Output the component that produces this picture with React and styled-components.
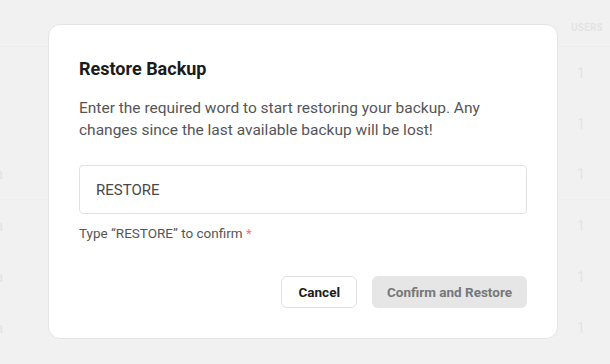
import React from "react";
import styled, { createGlobalStyle } from "styled-components";

const GlobalStyle = createGlobalStyle`
	html, body {
		margin: 0;
		padding: 0;
		background: #ffffff;
		font-family: Roboto, "Liberation Sans", Arial, sans-serif;
	}
	* {
		box-sizing: border-box;
	}
`;

const Page = styled.div`
	position: relative;
	width: 610px;
	height: 364px;
	overflow: hidden;
	background: #ffffff;
`;

const Table = styled.div`
	display: grid;
	grid-template-columns: 3px 1fr 39px;
	grid-auto-rows: 51px;
	grid-template-rows: 47px;
	color: #666666;
`;

const HeadCell = styled.div`
	padding-top: 22px;
	font-size: 10px;
	font-weight: 700;
	letter-spacing: 0.2px;
	text-transform: uppercase;
	border-bottom: 1px solid #d6d6d6;
`;

const Cell = styled.div`
	display: flex;
	align-items: center;
	justify-content: ${({ $align }) => ($align === "right" ? "flex-end" : "flex-start")};
	padding-left: ${({ $indent }) => $indent || 0}px;
	font-size: 14px;
	white-space: nowrap;
	overflow: hidden;
	border-bottom: ${({ $divider }) => ($divider ? "1px solid #d6d6d6" : "none")};
`;

const Overlay = styled.div`
	position: absolute;
	inset: 0;
	display: flex;
	align-items: center;
	justify-content: center;
	padding-right: 4px;
	padding-bottom: 1px;
	background: rgba(240, 240, 240, 0.9);
`;

const Modal = styled.div`
	width: 510px;
	padding: 32px 30px 30px;
	background: #ffffff;
	border: 1px solid #e4e4e4;
	border-radius: 12px;
`;

const Title = styled.h2`
	margin: 0;
	font-size: 18px;
	line-height: 24px;
	font-weight: 700;
	color: #1b1b1b;
`;

const Text = styled.p`
	margin: 16px 0 0;
	font-size: 15.5px;
	line-height: 22px;
	color: #555558;
`;

const Input = styled.input`
	display: block;
	width: 100%;
	height: 49px;
	margin-top: 24px;
	padding: 0 16px;
	border: 1px solid #e2e2e2;
	border-radius: 4px;
	font-family: inherit;
	font-size: 15px;
	color: #48484c;
	outline: none;
`;

const Hint = styled.div`
	margin-top: 9px;
	font-size: 13.5px;
	line-height: 20px;
	color: #555558;
`;

const Required = styled.span`
	color: #f07a7a;
`;

const Actions = styled.div`
	display: flex;
	justify-content: flex-end;
	gap: 15px;
	margin-top: 33px;
`;

const Button = styled.button`
	height: 32px;
	padding: 0 ${({ $primary }) => ($primary ? 15 : 16)}px;
	border: ${({ $primary }) => ($primary ? "none" : "1px solid #e0e0e0")};
	border-radius: 6px;
	background: ${({ $primary }) => ($primary ? "#e6e6e6" : "#ffffff")};
	color: ${({ $primary }) => ($primary ? "#77777a" : "#1b1b1b")};
	font-family: inherit;
	font-size: 13.5px;
	font-weight: 700;
	cursor: pointer;
`;

const rows = [
	{ name: "", users: 1 },
	{ name: "", users: 1 },
	{ name: "Beta", users: 1, divider: true },
	{ name: "Alpha", users: 1 },
	{ name: "Data", users: 1 },
	{ name: "Media", users: 1 },
];

const App = () => {
	return (
		<Page>
			<GlobalStyle />
			<Table>
				<HeadCell />
				<HeadCell />
				<HeadCell>Users</HeadCell>
				{rows.map((row, i) => (
					<React.Fragment key={i}>
						<Cell $align="right" $divider={row.divider}>{row.name}</Cell>
						<Cell $divider={row.divider} />
						<Cell $indent={6} $divider={row.divider}>{row.users}</Cell>
					</React.Fragment>
				))}
			</Table>
			<Overlay>
				<Modal>
					<Title>Restore Backup</Title>
					<Text>
						Enter the required word to start restoring your backup. Any changes since the last
						available backup will be lost!
					</Text>
					<Input defaultValue="RESTORE" />
					<Hint>
						Type “RESTORE” to confirm <Required>*</Required>
					</Hint>
					<Actions>
						<Button>Cancel</Button>
						<Button $primary disabled>
							Confirm and Restore
						</Button>
					</Actions>
				</Modal>
			</Overlay>
		</Page>
	);
};

export default App;
